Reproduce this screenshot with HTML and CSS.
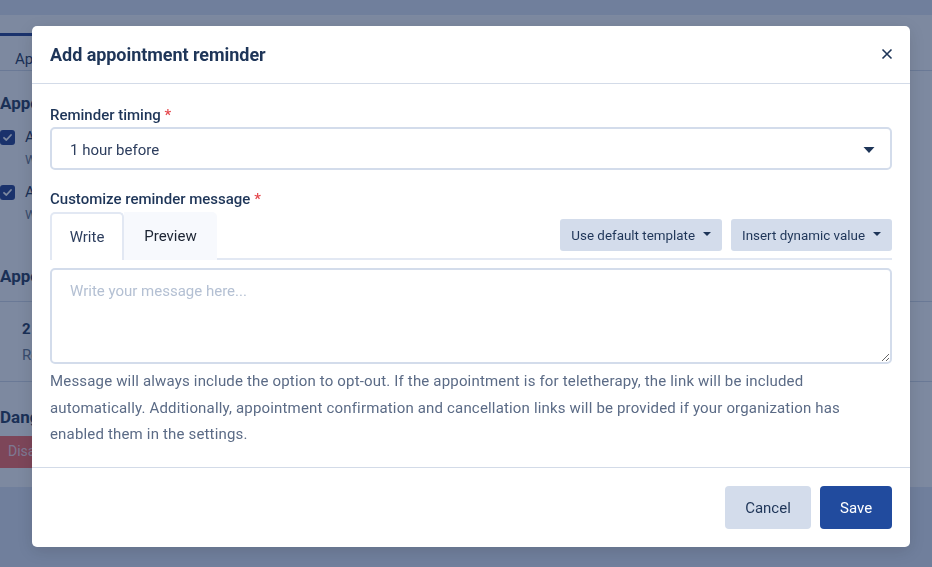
FILE: index.html
```html
<!DOCTYPE html>
<html lang="en">
<head>
<meta charset="utf-8">
<title>Add appointment reminder</title>
<link rel="stylesheet" href="styles.css">
</head>
<body>
<div class="page">
  <div class="topbar"></div>
  <div class="card">
    <div class="page-tabs">
      <div class="page-tab active">Appointment reminders</div>
    </div>
    <div class="card-body">
      <h2 class="sec-title">Appointment reminders</h2>
      <div class="check-row">
        <span class="check"><svg width="15" height="15" viewBox="0 0 15 15"><path d="M4 7.8 L6.4 10 L11 5" stroke="#fff" stroke-width="1.8" fill="none" stroke-linecap="round" stroke-linejoin="round"/></svg></span>
        <div>
          <div class="check-label">Appointment reminder emails</div>
          <div class="check-sub">When enabled, clients receive emails</div>
        </div>
      </div>
      <div class="check-row">
        <span class="check"><svg width="15" height="15" viewBox="0 0 15 15"><path d="M4 7.8 L6.4 10 L11 5" stroke="#fff" stroke-width="1.8" fill="none" stroke-linecap="round" stroke-linejoin="round"/></svg></span>
        <div>
          <div class="check-label">Appointment reminder texts</div>
          <div class="check-sub">When enabled, clients receive texts</div>
        </div>
      </div>
      <h2 class="sec-title sec-title2">Appointment reminder schedule</h2>
      <div class="rem-box">
        <div class="rem-title">2 hours before</div>
        <div class="rem-sub">Reminder message</div>
      </div>
      <h2 class="sec-title sec-title3">Danger zone</h2>
      <div class="danger-btn">Disable reminders</div>
    </div>
  </div>
</div>

<div class="overlay"></div>

<div class="modal" role="dialog">
  <div class="modal-header">
    <h1 class="modal-title">Add appointment reminder</h1>
    <button class="close-btn" aria-label="Close">
      <svg width="12" height="12" viewBox="0 0 12 12"><path d="M1.5 1.5 L10.5 10.5 M10.5 1.5 L1.5 10.5" stroke="#1e3558" stroke-width="1.6" fill="none"/></svg>
    </button>
  </div>
  <div class="modal-body">
    <label class="field-label">Reminder timing <span class="req">*</span></label>
    <div class="select">
      <span>1 hour before</span>
      <svg class="select-caret" width="12" height="8" viewBox="0 0 12 8"><path d="M0.5 1 L11.5 1 L6 7 Z" fill="#1e3558"/></svg>
    </div>

    <label class="field-label label2">Customize reminder message <span class="req">*</span></label>
    <div class="tabbar">
      <div class="tab active">Write</div>
      <div class="tab">Preview</div>
      <div class="tab-actions">
        <button class="drop-btn">Use default template <span class="mini-caret"></span></button>
        <button class="drop-btn">Insert dynamic value <span class="mini-caret"></span></button>
      </div>
    </div>
    <textarea class="message" placeholder="Write your message here..."></textarea>
    <p class="help">Message will always include the option to opt-out. If the appointment is for teletherapy, the link will be included automatically. Additionally, appointment confirmation and cancellation links will be provided if your organization has enabled them in the settings.</p>
  </div>
  <div class="modal-footer">
    <button class="btn btn-cancel">Cancel</button>
    <button class="btn btn-save">Save</button>
  </div>
</div>
</body>
</html>
```
FILE: styles.css
```css
* { box-sizing: border-box; }
html, body { margin: 0; padding: 0; }
body {
  font-family: Roboto, "Noto Sans", "Liberation Sans", sans-serif;
  background: #e1e8f5;
  width: 932px;
  height: 567px;
  overflow: hidden;
  color: #1e3558;
}

/* background page */
.page { width: 932px; }
.topbar { height: 15px; }
.card {
  background: #ffffff;
  height: 472px;
}
.page-tabs {
  display: flex;
  padding-top: 18px;
  border-bottom: 1px solid #d3dbe8;
  height: 56px;
}
.page-tab {
  padding: 14px 15px 0;
  font-size: 15px;
  color: #1e3558;
}
.page-tab.active {
  border-top: 3px solid #1e3a8a;
  background: #fff;
}
.card-body { padding: 0; }
.sec-title {
  margin: 21px 0 0;
  font-size: 17px;
  font-weight: 700;
  color: #1e3558;
  line-height: 22px;
}
.check-row {
  display: flex;
  gap: 10px;
  margin-top: 13px;
  align-items: flex-start;
}
.check-row + .check-row { margin-top: 12px; }
.check {
  width: 15px;
  height: 15px;
  border-radius: 3px;
  background: #1e3a8a;
  margin-top: 3px;
  flex: none;
  display: flex;
}
.check-label { font-size: 15px; line-height: 20px; }
.check-sub { font-size: 13px; color: #64748b; line-height: 20px; margin-top: 3px; }
.sec-title2 { margin-top: 40px; }
.rem-box {
  margin-top: 14px;
  border-top: 1px solid #d3dbe8;
  border-bottom: 1px solid #d3dbe8;
  height: 81px;
  padding: 16px 22px 0;
}
.rem-title { font-weight: 700; font-size: 15px; line-height: 22px; }
.rem-sub { font-size: 15px; color: #64748b; line-height: 22px; margin-top: 4px; }
.sec-title3 { margin-top: 24px; }
.danger-btn {
  margin-top: 8px;
  width: 140px;
  height: 32px;
  background: #fe675f;
  color: #ffd9df;
  font-size: 14px;
  padding: 7px 8px;
  border-radius: 0 4px 4px 0;
}

.overlay {
  position: fixed;
  inset: 0;
  background: rgba(24, 44, 86, 0.56);
}

/* modal */
.modal {
  position: fixed;
  left: 32px;
  top: 26px;
  width: 878px;
  height: 521px;
  background: #fff;
  border-radius: 5px;
  box-shadow: 0 4px 16px rgba(0, 0, 0, 0.12);
  display: flex;
  flex-direction: column;
}
.modal-header {
  height: 58px;
  display: flex;
  align-items: center;
  justify-content: space-between;
  padding: 0 17px 0 18px;
  border-bottom: 1px solid #d3dbe8;
  flex: none;
}
.modal-title {
  margin: 0;
  font-size: 18px;
  font-weight: 700;
  letter-spacing: -0.05px;
  color: #1e3558;
}
.close-btn {
  border: 0;
  background: transparent;
  padding: 0;
  width: 12px;
  height: 12px;
  display: flex;
  margin-top: -1px;
}
.modal-body {
  padding: 21px 18px 0 18px;
  flex: 1;
}
.field-label {
  display: block;
  font-size: 15px;
  font-weight: 500;
  color: #1e3558;
  line-height: 20px;
  margin-bottom: 2px;
}
.req { color: #e5484d; }
.label2 { margin-top: 19px; margin-bottom: 3px; }
.select {
  height: 43px;
  border: 2px solid #d3dceb;
  border-radius: 5px;
  display: flex;
  align-items: center;
  justify-content: space-between;
  padding: 2px 15px 0 18px;
  font-size: 15px;
  color: #2d3e5e;
}
.tabbar {
  display: flex;
  align-items: stretch;
  height: 48px;
  border-bottom: 2px solid #e2e8f3;
}
.tab {
  display: flex;
  align-items: center;
  font-size: 15px;
  color: #1c2433;
  background: #f7f9fd;
  margin-bottom: -2px;
  border-radius: 0 5px 0 0;
  width: 93px;
  justify-content: center;
}
.tab.active {
  background: #fff;
  color: #2d3e5e;
  border: 2px solid #e2e8f3;
  border-bottom: 0;
  border-radius: 5px 5px 0 0;
  width: 74px;
}
.tab-actions {
  margin-left: auto;
  display: flex;
  gap: 9px;
  align-items: center;
  padding-top: 0;
}
.drop-btn {
  height: 32px;
  border: 0;
  border-radius: 3px;
  background: #d3dceb;
  color: #1e3558;
  font-family: inherit;
  font-size: 13.4px;
  padding: 0 11px;
  display: flex;
  align-items: center;
  gap: 8px;
}
.mini-caret {
  width: 0;
  height: 0;
  border-left: 4px solid transparent;
  border-right: 4px solid transparent;
  border-top: 4px solid #1e3558;
  margin-top: -2px;
}
.message {
  display: block;
  width: 100%;
  height: 96px;
  margin-top: 8px;
  border: 2px solid #d3dceb;
  border-radius: 5px;
  padding: 12px 18px;
  font-family: inherit;
  font-size: 15px;
  color: #2d3e5e;
  resize: vertical;
  outline: none;
}
.message::placeholder { color: #b4c0d3; }
.help {
  margin: 4px 0 0;
  font-size: 15px;
  letter-spacing: 0.17px;
  line-height: 26.5px;
  color: #5b6b86;
}
.modal-footer {
  flex: none;
  border-top: 1px solid #d3dbe8;
  padding: 18px;
  display: flex;
  justify-content: flex-end;
  gap: 9px;
}
.btn {
  height: 43px;
  border: 0;
  border-radius: 4px;
  font-family: inherit;
  font-size: 15px;
  padding: 0 20px;
}
.btn-cancel { background: #d3dceb; color: #1e3558; width: 86px; }
.btn-save { background: #214b9e; color: #fff; width: 72px; }
```
